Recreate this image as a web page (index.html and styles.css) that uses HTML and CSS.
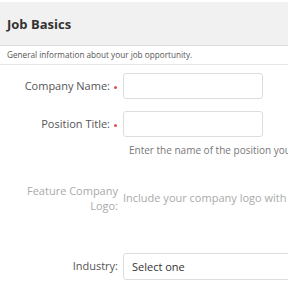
FILE: index.html
```html
<!DOCTYPE html>
<html>
<head>
<meta charset="utf-8">
<link rel="stylesheet" href="styles.css">
</head>
<body>
<div class="panel">
  <div class="header"><h2 class="title">Job Basics</h2></div>
  <div class="desc">General information about your job opportunity.</div>
  <div class="form">
    <div class="row row-company">
      <label class="label">Company Name:<span class="req"></span></label>
      <div class="field"><div class="input"></div></div>
    </div>
    <div class="row row-position">
      <label class="label">Position Title:<span class="req"></span></label>
      <div class="field">
        <div class="input"></div>
        <div class="hint">Enter the name of the position you</div>
      </div>
    </div>
    <div class="row row-logo">
      <label class="label muted">Feature Company<br>Logo:</label>
      <div class="field"><div class="logo-text">Include your company logo with</div></div>
    </div>
    <div class="row row-industry">
      <label class="label">Industry:</label>
      <div class="field"><div class="select">Select one</div></div>
    </div>
  </div>
</div>
</body>
</html>
```
FILE: styles.css
```css
html, body {
  margin: 0;
  padding: 0;
  background: #ffffff;
  overflow: hidden;
}
body {
  font-family: "Open Sans", "Liberation Sans", sans-serif;
  width: 288px;
  height: 288px;
}
.panel {
  padding-top: 2px;
}
.header {
  background: #f1f1f1;
  height: 43px;
  border-bottom: 1px solid #dcdcdc;
  display: flex;
  align-items: center;
  padding-left: 7px;
}
.title {
  margin: 0;
  font-size: 13px;
  font-weight: 700;
  color: #333333;
}
.desc {
  height: 18px;
  line-height: 18px;
  font-size: 8.2px;
  color: #555555;
  padding-left: 7px;
  border-bottom: 1px solid #e6e6e6;
}
.form {
  padding-top: 8px;
}
.row {
  display: grid;
  grid-template-columns: 118px 1fr;
  column-gap: 5px;
  white-space: nowrap;
}
.label {
  text-align: right;
  font-size: 11px;
  color: #555555;
  line-height: 26px;
}
.req {
  display: inline-block;
  width: 3px;
  height: 3px;
  border-radius: 50%;
  background: #d9534f;
  margin-left: 4px;
  margin-right: 1px;
  vertical-align: middle;
}
.input {
  width: 138px;
  height: 24px;
  border: 1px solid #dddddd;
  border-radius: 3px;
  background: #fff;
}
.row-position {
  margin-top: 12px;
}
.hint {
  font-size: 10px;
  color: #777777;
  padding-left: 6px;
  margin-top: 6px;
  line-height: 14px;
}
.row-logo {
  margin-top: 26px;
}
.muted {
  color: #aaaaaa;
  line-height: 15px;
  font-size: 11px;
}
.logo-text {
  font-size: 11px;
  color: #aaaaaa;
  line-height: 15px;
  margin-top: 7px;
}
.row-industry {
  margin-top: 40px;
}
.select {
  width: 200px;
  height: 25px;
  line-height: 25px;
  border: 1px solid #dddddd;
  border-radius: 3px;
  padding-left: 8px;
  font-size: 11px;
  color: #333333;
}
```
